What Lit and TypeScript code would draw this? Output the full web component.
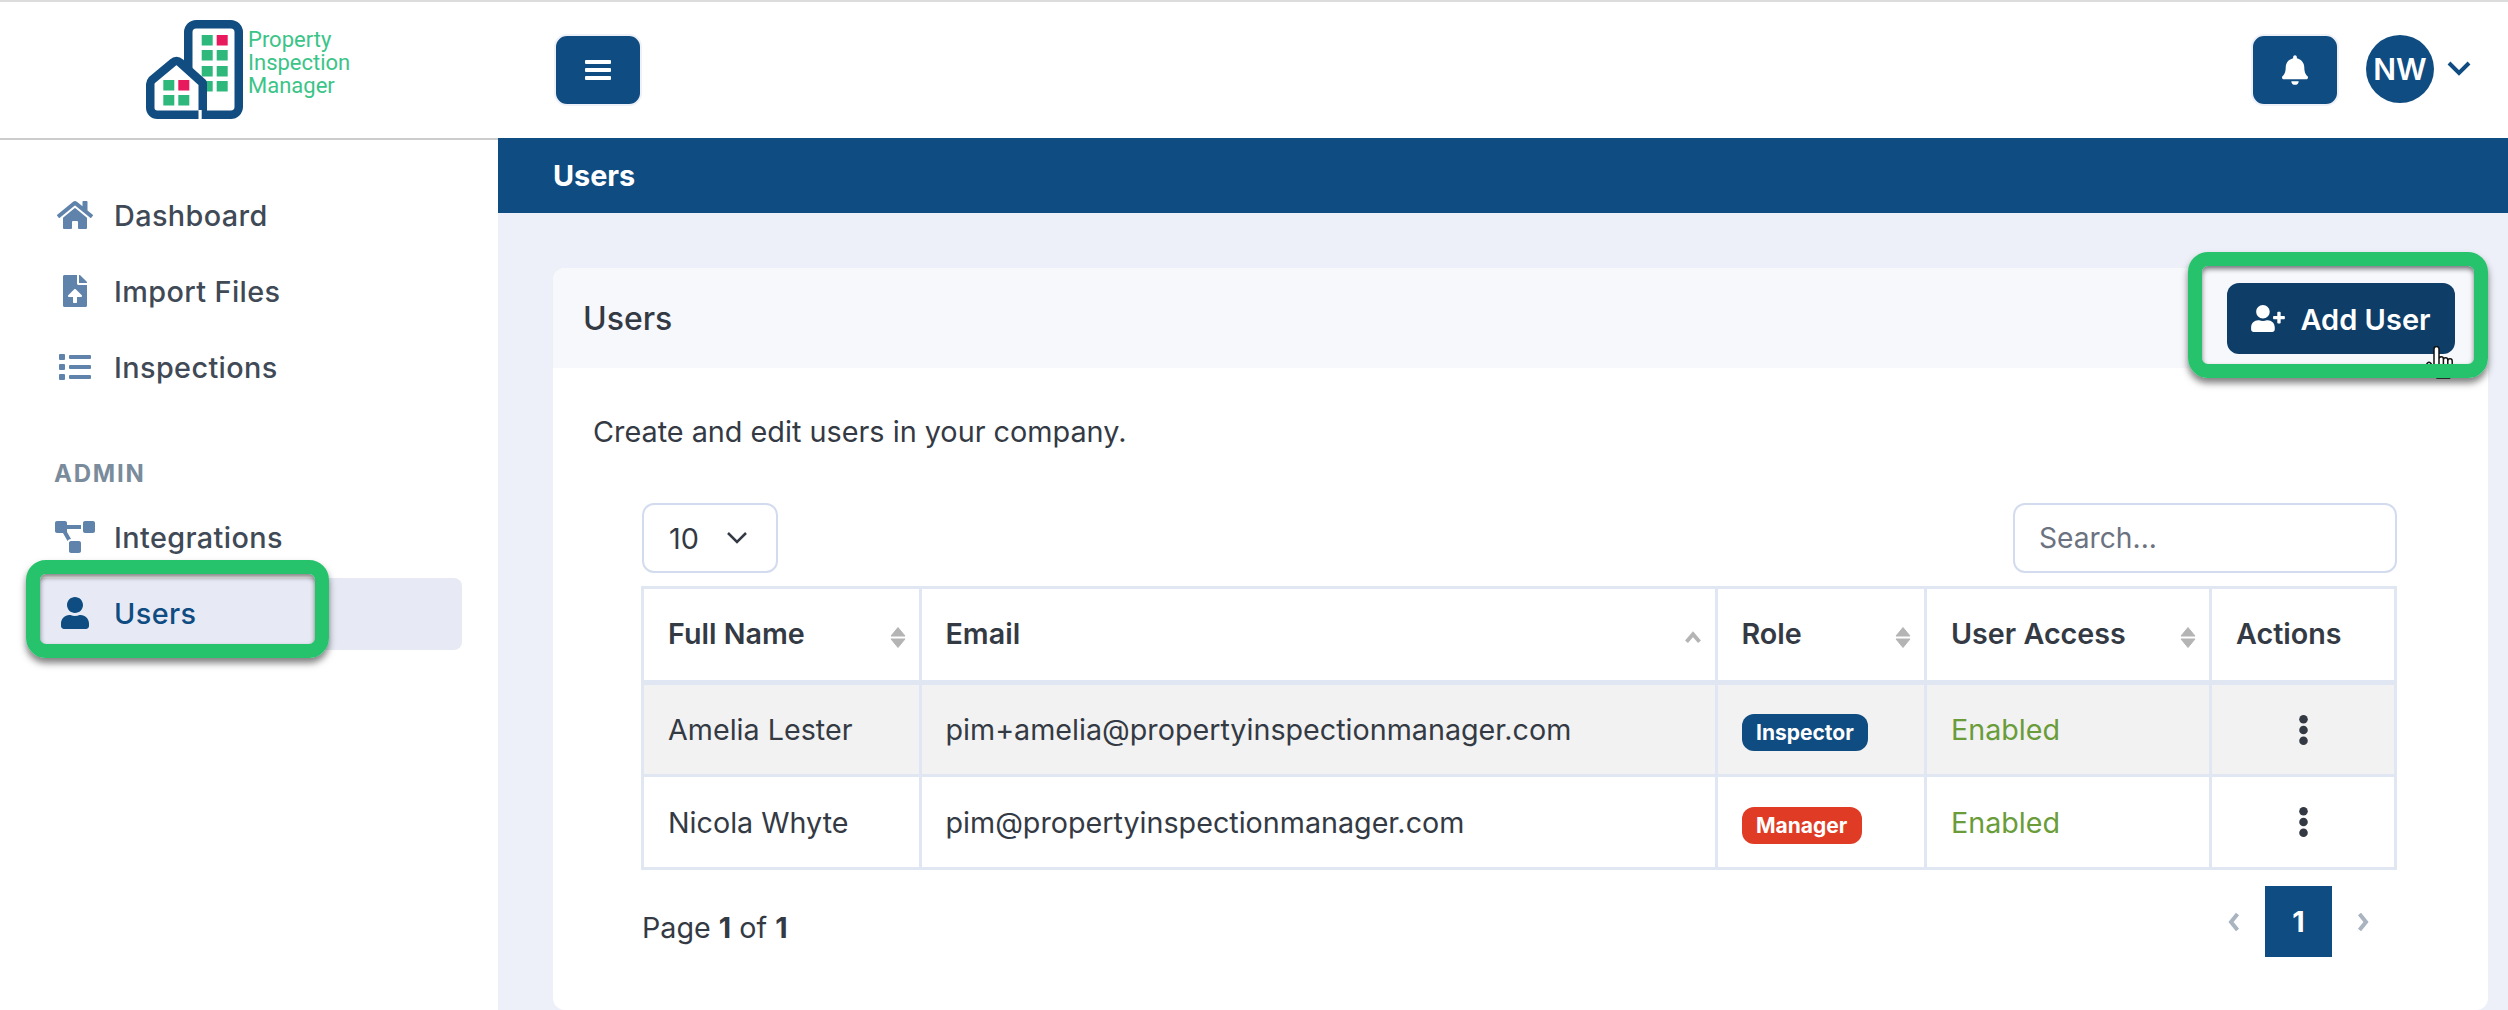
import { LitElement, html, css, svg } from "lit";
import { customElement } from "lit/decorators.js";

const I = {
  home: ["0 0 576 512", "M280.37 148.26L96 300.11V464a16 16 0 0 0 16 16l112.06-.29a16 16 0 0 0 15.92-16V368a16 16 0 0 1 16-16h64a16 16 0 0 1 16 16v95.64a16 16 0 0 0 16 16.05L464 480a16 16 0 0 0 16-16V300L295.67 148.26a12.19 12.19 0 0 0-15.3 0zM571.6 251.47L488 182.56V44.05a12 12 0 0 0-12-12h-56a12 12 0 0 0-12 12v72.61L318.47 43a48 48 0 0 0-61 0L4.34 251.47a12 12 0 0 0-1.6 16.9l25.5 31A12 12 0 0 0 45.15 301l235.22-193.74a12.19 12.19 0 0 1 15.3 0L530.9 301a12 12 0 0 0 16.9-1.6l25.5-31a12 12 0 0 0-1.7-16.93z"],
  file: ["0 0 384 512", "M224 136V0H24C10.7 0 0 10.7 0 24v464c0 13.3 10.7 24 24 24h336c13.3 0 24-10.7 24-24V160H248c-13.2 0-24-10.8-24-24zm65.18 216.01H224v80c0 8.84-7.16 16-16 16h-32c-8.84 0-16-7.16-16-16v-80H94.82c-14.28 0-21.41-17.29-11.27-27.36l96.42-95.7c6.65-6.61 17.39-6.61 24.04 0l96.42 95.7c10.15 10.07 3.03 27.36-11.25 27.36zM377 105L279.1 7c-4.5-4.5-10.6-7-17-7H256v128h128v-6.1c0-6.3-2.5-12.4-7-16.9z"],
  list: ["0 0 512 512", "M80 368H16a16 16 0 0 0-16 16v64a16 16 0 0 0 16 16h64a16 16 0 0 0 16-16v-64a16 16 0 0 0-16-16zm0-320H16A16 16 0 0 0 0 64v64a16 16 0 0 0 16 16h64a16 16 0 0 0 16-16V64a16 16 0 0 0-16-16zm0 160H16a16 16 0 0 0-16 16v64a16 16 0 0 0 16 16h64a16 16 0 0 0 16-16v-64a16 16 0 0 0-16-16zm416 176H176a16 16 0 0 0-16 16v32a16 16 0 0 0 16 16h320a16 16 0 0 0 16-16v-32a16 16 0 0 0-16-16zm0-320H176a16 16 0 0 0-16 16v32a16 16 0 0 0 16 16h320a16 16 0 0 0 16-16V80a16 16 0 0 0-16-16zm0 160H176a16 16 0 0 0-16 16v32a16 16 0 0 0 16 16h320a16 16 0 0 0 16-16v-32a16 16 0 0 0-16-16z"],
  diagram: ["0 0 640 512", "M384 320H256c-17.67 0-32 14.33-32 32v128c0 17.67 14.33 32 32 32h128c17.67 0 32-14.33 32-32V352c0-17.67-14.33-32-32-32zM192 32c0-17.67-14.33-32-32-32H32C14.33 0 0 14.33 0 32v128c0 17.67 14.33 32 32 32h95.72l73.16 128.04C211.98 300.98 232.4 288 256 288h.28L192 175.51V128h224V64H192V32zM608 0H480c-17.67 0-32 14.33-32 32v128c0 17.67 14.33 32 32 32h128c17.67 0 32-14.33 32-32V32c0-17.67-14.33-32-32-32z"],
  user: ["0 0 448 512", "M224 256c70.7 0 128-57.3 128-128S294.7 0 224 0 96 57.3 96 128s57.3 128 128 128zm89.6 32h-16.7c-22.2 10.2-46.9 16-72.9 16s-50.6-5.8-72.9-16h-16.7C60.2 288 0 348.2 0 422.4V464c0 26.5 21.5 48 48 48h352c26.5 0 48-21.5 48-48v-41.6c0-74.2-60.2-134.4-134.4-134.4z"],
  userPlus: ["0 0 640 512", "M624 208h-64v-64c0-8.8-7.2-16-16-16h-32c-8.8 0-16 7.2-16 16v64h-64c-8.8 0-16 7.2-16 16v32c0 8.8 7.2 16 16 16h64v64c0 8.8 7.2 16 16 16h32c8.8 0 16-7.2 16-16v-64h64c8.8 0 16-7.2 16-16v-32c0-8.8-7.2-16-16-16zm-400 48c70.7 0 128-57.3 128-128S294.7 0 224 0 96 57.3 96 128s57.3 128 128 128zm89.6 32h-16.7c-22.2 10.2-46.9 16-72.9 16s-50.6-5.8-72.9-16h-16.7C60.2 288 0 348.2 0 422.4V464c0 26.5 21.5 48 48 48h352c26.5 0 48-21.5 48-48v-41.6c0-74.2-60.2-134.4-134.4-134.4z"],
  bell: ["0 0 448 512", "M224 512c35.32 0 63.97-28.65 63.97-64H160.03c0 35.35 28.65 64 63.97 64zm215.39-149.71c-19.32-20.76-55.47-51.99-55.47-154.29 0-77.7-54.48-139.9-127.94-155.16V32c0-17.67-14.32-32-31.98-32s-31.98 14.33-31.98 32v20.84C118.56 68.1 64.08 130.3 64.08 208c0 102.3-36.15 133.53-55.47 154.29-6 6.45-8.66 14.16-8.61 21.71.11 16.4 12.98 32 32.1 32h383.8c19.12 0 32-15.6 32.1-32 .05-7.55-2.61-15.27-8.61-21.71z"],
} as const;

const icon = (k: keyof typeof I, cls: string) =>
  html`<svg class=${cls} viewBox=${I[k][0]} fill="currentColor"><path d=${I[k][1]}></path></svg>`;

const sortBoth = html`<svg class="sort" viewBox="0 0 16 21"><path d="M8 0.500l7 8.500H1z" fill="#b4b4b4" stroke="#b4b4b4" stroke-linejoin="round"></path><path d="M8 20.500L1 12h14z" fill="#b4b4b4" stroke="#b4b4b4" stroke-linejoin="round"></path></svg>`;
const sortUp = html`<svg class="sort-up" viewBox="0 0 16 12"><path d="M2 10l6-7 6 7" fill="none" stroke="#b4b4b4" stroke-width="3.5"></path></svg>`;
const dots = html`<svg class="dots" viewBox="0 0 8 28"><circle cx="4" cy="4" r="4"></circle><circle cx="4" cy="14" r="4"></circle><circle cx="4" cy="24" r="4"></circle></svg>`;

const win = (list: number[][], red: number) =>
  list.map(([x, y], i) => svg`<rect x=${x} y=${y} width="11" height="10.500" fill=${i === red ? "#e8195c" : "#2fb87c"}></rect>`);

const logo = html`<svg class="logo-mark" viewBox="0 0 100 102">
  <rect x="42.250" y="4.250" width="50.500" height="90.500" rx="8" fill="#fff" stroke="#114d80" stroke-width="8.500"></rect>
  ${win([[55.7, 15], [70.7, 15], [55.7, 30], [70.7, 30], [55.7, 46], [70.7, 46], [55.7, 61], [70.7, 61]], 1)}
  <path d="M56.750 99V63L34 42.500a5 5 0 0 0-7 0L6 60a7 7 0 0 0-1.750 5V87.750a7 7 0 0 0 7 7H56" fill="#fff" stroke="#114d80" stroke-width="8.500" stroke-linejoin="round"></path>
  ${win([[17.3, 60], [32.3, 60], [17.3, 75], [32.3, 75]], 1)}
  <rect x="52.500" y="90" width="3.200" height="9.500" fill="#fff"></rect>
</svg>`;

@customElement("app-root")
export class AppRoot extends LitElement {
  static styles = css`
    :host { display: block; position: relative; width: 2508px; height: 1010px; overflow: hidden; background: #edf0f8;
      font-family: Inter, "Liberation Sans", sans-serif; color: #343a44; font-size: 28.7px; box-sizing: border-box; border-top: 2px solid #dcdcdc; }
    * { box-sizing: border-box; }
    .topbar { display: flex; height: 136px; background: #fff; align-items: center; }
    .brand { width: 498px; height: 100%; display: flex; align-items: flex-start; padding: 18px 0 0 146px; gap: 2px; flex: none; }
    .logo-mark { width: 100px; height: 102px; flex: none; }
    .logo-text { font-family: Roboto, sans-serif; color: #3bc488; font-size: 22px; line-height: 23px; padding-top: 8px; }
    .tb-btn { width: 88px; height: 72px; background: #0f4c81; border: 2px solid #eef1f8; border-radius: 13px; color: #fff; display: flex; align-items: center; justify-content: center; padding: 0; }
    .menu { margin-left: 56px; }
    .bars { width: 26px; height: 20px; }
    .right { margin-left: auto; display: flex; align-items: center; padding-right: 36px; }
    .bell { width: 26px; height: 30px; }
    .avatar { width: 68px; height: 68px; border-radius: 50%; background: #0f4c81; color: #fff; display: flex; align-items: center; justify-content: center; font-weight: 600; font-size: 30px; margin-left: 27px; margin-top: -3px; }
    .chev { width: 26px; height: 16px; margin-left: 12px; margin-top: -4px; }
    .body { display: flex; height: 872px; }
    .side { width: 498px; flex: none; background: #fff; border-top: 2px solid #ccc; padding: 40px 36px 0 36px; }
    .nav { height: 72px; margin-bottom: 4px; padding-bottom: 2px; display: flex; align-items: center; color: #3f4a56; font-weight: 500; font-size: 28.8px; letter-spacing: .4px; border-radius: 8px; position: relative; }
    .nav.active { background: #e7eaf5; color: #0f4c81; }
    .ico { width: 43px; display: flex; justify-content: center; margin-left: 17px; margin-right: 18px; color: #5f83ab; flex: none; }
    .nav.active .ico { color: #0f4c81; }
    .ico svg { display: block; }
    .i-home { width: 36px; height: 32px; } .i-file { width: 24px; height: 32px; } .i-list { width: 32px; height: 32px; }
    .i-diagram { width: 40px; height: 32px; } .i-user { width: 28px; height: 32px; }
    .section { height: 94px; padding: 51px 0 0 18px; font-size: 24px; line-height: 30px; font-weight: 700; letter-spacing: 1.8px; color: #7a8b9b; }
    .main { flex: 1; display: flex; flex-direction: column; }
    .title { height: 75px; background: #0f4c81; color: #fff; font-weight: 700; font-size: 28.8px; display: flex; align-items: center; padding-left: 55px; }
    .content { flex: 1; padding: 55px 24px 0 55px; }
    .card { background: #fff; border-radius: 12px; height: 742px; overflow: hidden; }
    .card-head { height: 100px; background: #f7f8fc; display: flex; align-items: center; justify-content: space-between; padding: 0 33px 0 30px; font-size: 32px; font-weight: 500; }
    .add { width: 228px; height: 71px; background: #0e3d68; color: #fff; border: 0; border-radius: 12px; font: 600 29px Inter, sans-serif; display: flex; align-items: center; justify-content: center; gap: 15px; padding: 2px 0 0 0; }
    .i-plus { width: 34px; height: 27px; margin-top: -2px; }
    .card-body { padding: 47px 91px 0 40px; }
    .intro { font-size: 28.8px; line-height: 34px; }
    .tools { display: flex; justify-content: space-between; margin: 54px 0 13px 49px; }
    .select { width: 136px; height: 70px; border: 2px solid #d3dbee; border-radius: 12px; display: flex; align-items: center; justify-content: space-between; padding: 0 27px 0 25px; font-size: 28.8px; }
    .select svg { width: 24px; height: 14px; }
    .search { width: 384px; height: 70px; border: 2px solid #d3dbee; border-radius: 12px; display: flex; align-items: center; padding-left: 24px; color: #6b7280; font-size: 28.2px; }
    table { border-collapse: collapse; table-layout: fixed; width: 1753px; margin-left: 48px; font-size: 28.7px; }
    th, td { border: 3px solid #e1e6f3; padding: 0 0 0 24px; text-align: left; position: relative; }
    th { height: 95px; font-weight: 600; border-bottom-width: 5px; padding-bottom: 2px; }
    td { height: 93px; }
    tr.hl td { background: #f2f2f2; }
    .sort { position: absolute; right: 13px; top: 38px; width: 16px; height: 21px; }
    .sort-up { position: absolute; right: 13px; top: 42px; width: 18px; height: 13px; }
    .badge { display: inline-flex; align-items: center; height: 37px; padding: 0 14.500px; border-radius: 12px; color: #fff; font-size: 21px; font-weight: 700; margin-top: 6px; vertical-align: middle; }
    .b-i { background: #0f4c81; } .b-m { background: #e03b24; }
    .on { color: #6a9c3a; }
    .center { padding: 0; text-align: center; }
    .dots { width: 9px; height: 30px; fill: #343a44; display: block; margin: 0 auto; }
    .foot { display: flex; justify-content: space-between; align-items: center; margin: 16px 0 0 49px; width: 1751px; height: 71px; }
    .foot-t { padding-top: 12px; }
    .pager { display: flex; align-items: center; height: 71px; padding-right: 23px; color: #a9b4c0; }
    .pager svg { width: 14px; height: 22px; }
    .cur { width: 67px; height: 71px; background: #0f4c81; color: #fff; font-weight: 700; font-size: 28.8px; display: flex; align-items: center; justify-content: center; margin: 0 24px; }
    .hl-box { position: absolute; border: 14px solid #27c26c; border-radius: 20px; box-shadow: 0 5px 7px rgba(0,0,0,.5), inset 0 3px 5px rgba(0,0,0,.5); pointer-events: none; }
    .hb1 { left: 26px; top: 558px; width: 303px; height: 98px; }
    .hb2 { left: 2188px; top: 250px; width: 300px; height: 126px; }
    .hand { position: absolute; left: 2426px; top: 344px; width: 30px; height: 36px; }
  `;

  render() {
    const nav = (k: keyof typeof I, cls: string, t: string, active = false) => html`
      <div class="nav ${active ? "active" : ""}"><span class="ico">${icon(k, cls)}</span>${t}</div>`;
    return html`
      <div class="topbar">
        <div class="brand">${logo}<div class="logo-text">Property<br />Inspection<br />Manager</div></div>
        <button class="tb-btn menu"><svg class="bars" viewBox="0 0 26 20" fill="#fff"><rect width="26" height="4" rx="1"></rect><rect y="8" width="26" height="4" rx="1"></rect><rect y="16" width="26" height="4" rx="1"></rect></svg></button>
        <div class="right">
          <button class="tb-btn">${icon("bell", "bell")}</button>
          <div class="avatar">NW</div>
          <svg class="chev" viewBox="0 0 26 16"><path d="M3 3l10 10 10-10" fill="none" stroke="#0f4c81" stroke-width="4"></path></svg>
        </div>
      </div>
      <div class="body">
        <aside class="side">
          ${nav("home", "i-home", "Dashboard")}
          ${nav("file", "i-file", "Import Files")}
          ${nav("list", "i-list", "Inspections")}
          <div class="section">ADMIN</div>
          ${nav("diagram", "i-diagram", "Integrations")}
          ${nav("user", "i-user", "Users", true)}
        </aside>
        <div class="main">
          <div class="title">Users</div>
          <div class="content">
            <div class="card">
              <div class="card-head">Users<button class="add">${icon("userPlus", "i-plus")}Add User</button></div>
              <div class="card-body">
                <div class="intro">Create and edit users in your company.</div>
                <div class="tools">
                  <div class="select">10<svg viewBox="0 0 24 14"><path d="M3 2l9 9 9-9" fill="none" stroke="#343a44" stroke-width="2.500"></path></svg></div>
                  <div class="search">Search...</div>
                </div>
                <table>
                  <colgroup><col style="width:277.500px" /><col style="width:796px" /><col style="width:209.500px" /><col style="width:285px" /><col style="width:185px" /></colgroup>
                  <thead><tr><th>Full Name${sortBoth}</th><th>Email${sortUp}</th><th>Role${sortBoth}</th><th>User Access${sortBoth}</th><th>Actions</th></tr></thead>
                  <tbody>
                    <tr class="hl"><td>Amelia Lester</td><td>pim+amelia@propertyinspectionmanager.com</td><td><span class="badge b-i">Inspector</span></td><td class="on">Enabled</td><td class="center">${dots}</td></tr>
                    <tr><td>Nicola Whyte</td><td>pim@propertyinspectionmanager.com</td><td><span class="badge b-m">Manager</span></td><td class="on">Enabled</td><td class="center">${dots}</td></tr>
                  </tbody>
                </table>
                <div class="foot">
                  <div class="foot-t">Page <b>1</b> of <b>1</b></div>
                  <div class="pager">
                    <svg viewBox="0 0 14 22"><path d="M10.500 3L4 11l6.500 8" fill="none" stroke="currentColor" stroke-width="4"></path></svg>
                    <div class="cur">1</div>
                    <svg viewBox="0 0 14 22"><path d="M3.500 3L10 11l-6.500 8" fill="none" stroke="currentColor" stroke-width="4"></path></svg>
                  </div>
                </div>
              </div>
            </div>
          </div>
        </div>
      </div>
      <svg class="hand" viewBox="0 0 30 36"><path d="M8 22V3a2.500 2.500 0 0 1 5 0V13a2.200 2.200 0 0 1 4.400 0v1a2.200 2.200 0 0 1 4.400 0v1a2.200 2.200 0 0 1 4.400 0V24c0 3-1.500 5-2.500 8H11L1.500 20a2 2 0 0 1 3-3zM13 13v7M17.400 14v6M21.800 15v5" fill="#fff" stroke="#111" stroke-width="1.500" stroke-linejoin="round"></path></svg>
      <div class="hl-box hb1"></div>
      <div class="hl-box hb2"></div>
    `;
  }
}
